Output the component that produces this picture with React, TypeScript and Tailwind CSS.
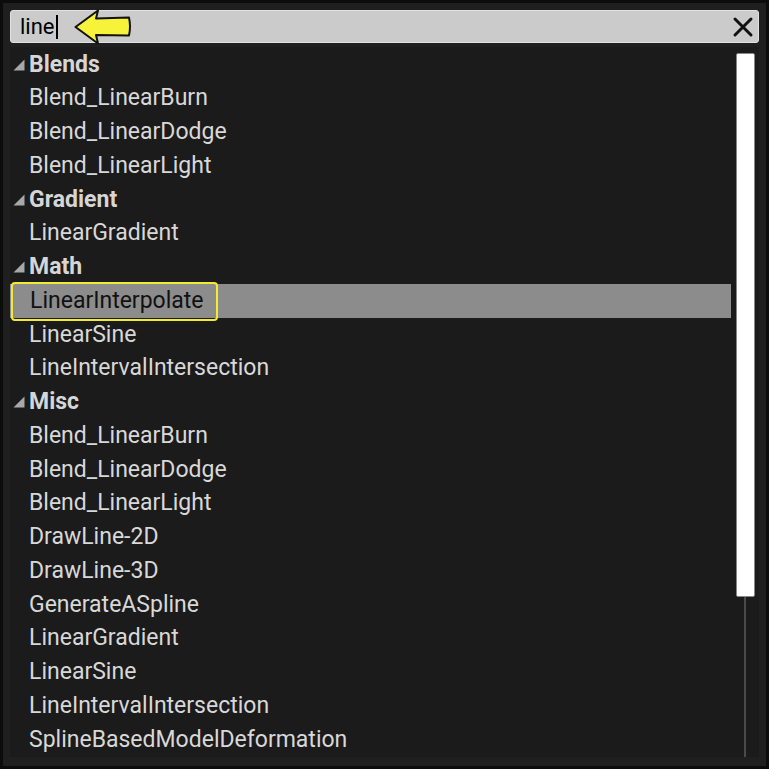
import React from "react"

type Row = { label: string; header?: boolean; selected?: boolean }

const rows: Row[] = [
  { label: "Blends", header: true },
  { label: "Blend_LinearBurn" },
  { label: "Blend_LinearDodge" },
  { label: "Blend_LinearLight" },
  { label: "Gradient", header: true },
  { label: "LinearGradient" },
  { label: "Math", header: true },
  { label: "LinearInterpolate", selected: true },
  { label: "LinearSine" },
  { label: "LineIntervalIntersection" },
  { label: "Misc", header: true },
  { label: "Blend_LinearBurn" },
  { label: "Blend_LinearDodge" },
  { label: "Blend_LinearLight" },
  { label: "DrawLine-2D" },
  { label: "DrawLine-3D" },
  { label: "GenerateASpline" },
  { label: "LinearGradient" },
  { label: "LinearSine" },
  { label: "LineIntervalIntersection" },
  { label: "SplineBasedModelDeformation" },
]

function Arrow() {
  return (
    <svg width="58" height="36" viewBox="0 0 58 36" className="-my-[2px] ml-[16px] shrink-0">
      <path
        d="M1.5 18 L24 1.5 L22 9.5 L55 8.5 Q57 17.5 55 26.5 L22 26 L24 34.5 Z"
        fill="#f7f23a"
        stroke="#111"
        strokeWidth="2"
        strokeLinejoin="round"
      />
    </svg>
  )
}

export default function App() {
  return (
    <div
      className="h-[769px] w-[769px] bg-[#0c0c0c] p-[3px]"
      style={{ fontFamily: "Roboto, 'Liberation Sans', sans-serif" }}
    >
      <div className="flex h-full w-full flex-col bg-[#1f1f1f] px-[7px] pt-[7px] pb-[9px]">
        {/* search */}
        <div className="flex h-[33px] items-center rounded-[3px] border border-[#e2e2e2] bg-[#cbcbcb] pl-[9px] pr-[4px]">
          <span className="text-[22px] leading-none text-black">line</span>
          <span className="ml-[1px] h-[24px] w-[2px] bg-black" />
          <Arrow />
          <div className="flex-1" />
          <svg width="22" height="22" viewBox="0 0 22 22">
            <path d="M3 3 L19 19 M19 3 L3 19" stroke="#111" strokeWidth="3" strokeLinecap="round" />
          </svg>
        </div>

        {/* list */}
        <div className="mt-[4px] flex flex-1 bg-[#1b1b1b]">
          <div className="flex flex-1 flex-col pt-[1px]">
            {rows.map((r, i) =>
              r.header ? (
                <div key={i} className="flex h-[33.75px] items-center pl-[3px]">
                  <svg width="12" height="12" viewBox="0 0 12 12" className="mr-[4px]">
                    <path d="M11.5 0.5 L11.5 11.5 L0.5 11.5 Z" fill="#a8a8a8" />
                  </svg>
                  <span className="text-[23px] font-bold text-[#d6d6d6]">{r.label}</span>
                </div>
              ) : r.selected ? (
                <div key={i} className="flex h-[33.75px] items-center bg-[#8c8c8c]">
                  <div className="ml-[1px] flex h-[39px] items-center rounded-[4px] border-2 border-[#f2ea33] pl-[17px] pr-[12px]">
                    <span className="text-[23px] text-[#111]">{r.label}</span>
                  </div>
                </div>
              ) : (
                <div key={i} className="flex h-[33.75px] items-center pl-[19px]">
                  <span className="text-[23px] text-[#d8d8d8]">{r.label}</span>
                </div>
              ),
            )}
          </div>
          {/* scrollbar */}
          <div className="flex w-[28px] flex-col items-center pt-[6px]">
            <div className="h-[544px] w-[19px] shrink-0 rounded-[2px] border border-[#888] bg-white" />
            <div className="w-[2px] flex-1 bg-[#4a4a4a]" />
          </div>
        </div>
      </div>
    </div>
  )
}
